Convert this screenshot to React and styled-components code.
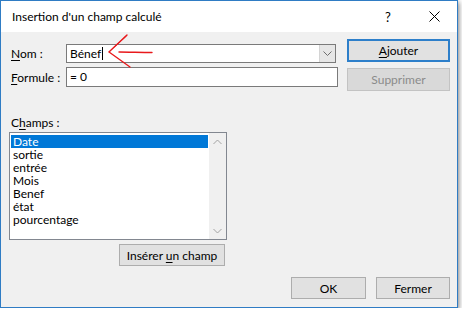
import React from 'react'
import styled, { createGlobalStyle } from 'styled-components'

const GlobalStyle = createGlobalStyle`
  html, body {
    margin: 0;
    background: #ffffff;
  }
  body {
    font-family: "Segoe UI", Lato, "Noto Sans", sans-serif;
    font-size: 12px;
    color: #000;
  }
`

const fields = ['Date', 'sortie', 'entrée', 'Mois', 'Benef', 'état', 'pourcentage']

const App = () => {
  return <>
    <GlobalStyle />
    <Window>
      <TitleBar>
        <Title>Insertion d'un champ calculé</Title>
        <CaptionButton>?</CaptionButton>
        <CaptionButton>
          <svg width="11" height="11" viewBox="0 0 11 11">
            <path d="M0.5 0.5 L10.5 10.5 M10.5 0.5 L0.5 10.5" stroke="#000" strokeWidth="1" />
          </svg>
        </CaptionButton>
      </TitleBar>

      <Body>
        <TopSection>
          <FormGrid>
            <Label><Key>N</Key>om :</Label>
            <TextInput $width={270} $height={19}>
              <InputText>Bénef</InputText>
              <Caret />
              <ComboArrow>
                <svg width="9" height="6" viewBox="0 0 9 6">
                  <path d="M0.5 0.5 L4.5 4.5 L8.5 0.5" stroke="#6d6d6d" fill="none" />
                </svg>
              </ComboArrow>
            </TextInput>
            <Label><Key>F</Key>ormule :</Label>
            <TextInput $width={272} $height={20}>
              <InputText>= 0</InputText>
            </TextInput>
          </FormGrid>

          <ButtonColumn>
            <Button $primary><Key>A</Key>jouter</Button>
            <Button disabled>Supprimer</Button>
          </ButtonColumn>
        </TopSection>

        <FieldsLabel>C<Key>h</Key>amps :</FieldsLabel>
        <ListBox>
          <Items>
            {fields.map((f, i) => (
              <Item key={f} $selected={i === 0}>{f}</Item>
            ))}
          </Items>
          <ScrollBar>
            <ScrollArrow>
              <svg width="9" height="6" viewBox="0 0 9 6">
                <path d="M0.5 5 L4.5 1 L8.5 5" stroke="#a3a3a3" fill="none" />
              </svg>
            </ScrollArrow>
            <ScrollArrow>
              <svg width="9" height="6" viewBox="0 0 9 6">
                <path d="M0.5 1 L4.5 5 L8.5 1" stroke="#a3a3a3" fill="none" />
              </svg>
            </ScrollArrow>
          </ScrollBar>
        </ListBox>
        <InsertRow>
          <Button $width={106} $height={22}>Insérer <Key>u</Key>n champ</Button>
        </InsertRow>

        <Footer>
          <Button $width={75} $height={22}>OK</Button>
          <Button $width={74} $height={22}>Fermer</Button>
        </Footer>
      </Body>

      <Scribble width="50" height="36" viewBox="0 0 50 36">
        <path d="M22 1 C17 6 10 12 4 18 C11 23 18 28 25 33" stroke="#e8191c" strokeWidth="1.4" fill="none" strokeLinecap="round" />
        <path d="M20 3 C15 8 9 13 5 17" stroke="#e8191c" strokeWidth="1" fill="none" strokeLinecap="round" />
        <path d="M14 18 C24 18 36 18.5 47 18.5" stroke="#e8191c" strokeWidth="1.4" fill="none" strokeLinecap="round" />
      </Scribble>
    </Window>
  </>
}

const Window = styled.div`
  position: relative;
  width: 458px;
  height: 308px;
  box-sizing: border-box;
  border: 1px solid #2f7cc4;
  background: #f0f0f0;
  display: flex;
  flex-direction: column;
  box-shadow: 1px 2px 5px rgba(0, 0, 0, 0.5);
`

const TitleBar = styled.div`
  height: 31px;
  background: #ffffff;
  display: flex;
  align-items: center;
  padding-left: 11px;
`

const Title = styled.div`
  flex: 1;
  font-size: 12px;
`

const CaptionButton = styled.div`
  width: 46px;
  height: 31px;
  display: flex;
  align-items: center;
  justify-content: center;
  font-size: 13px;
`

const Body = styled.div`
  flex: 1;
  display: flex;
  flex-direction: column;
  padding: 7px 6px 8px 8px;
`

const TopSection = styled.div`
  display: flex;
  align-items: flex-start;
`

const FormGrid = styled.div`
  width: 329px;
  margin-top: 5px;
  display: grid;
  grid-template-columns: 57px 1fr;
  row-gap: 4px;
  align-items: center;
`

const Label = styled.div`
  padding-left: 2px;
`

const Key = styled.span`
  text-decoration: underline;
  text-underline-offset: 2px;
`

const TextInput = styled.div`
  position: relative;
  width: ${({ $width }) => $width}px;
  height: ${({ $height }) => $height}px;
  box-sizing: border-box;
  border: 1px solid #7a7a7a;
  background: #ffffff;
  display: flex;
  align-items: center;
  padding-left: 3px;
`

const InputText = styled.span`
  line-height: 1;
`

const Caret = styled.span`
  width: 1px;
  height: 13px;
  margin-left: 1px;
  background: #000;
`

const ComboArrow = styled.div`
  margin-left: auto;
  align-self: stretch;
  width: 15px;
  background: #e6e6e6;
  border-left: 1px solid #d4d4d4;
  display: flex;
  align-items: center;
  justify-content: center;
`

const ButtonColumn = styled.div`
  margin-left: 9px;
  display: flex;
  flex-direction: column;
  gap: 6px;
`

const Button = styled.button`
  width: ${({ $width }) => $width || 103}px;
  height: ${({ $height }) => $height || 23}px;
  box-sizing: border-box;
  padding: 0;
  font-family: inherit;
  font-size: 12px;
  color: #000;
  background: #e1e1e1;
  border: ${({ $primary }) => $primary ? '2px solid #2d7fca' : '1px solid #adadad'};

  &:disabled {
    color: #8b8b8b;
    background: #d9d9d9;
    border-color: #c3c3c3;
  }
`

const FieldsLabel = styled.div`
  margin-top: 24px;
  padding-left: 2px;
  line-height: 15px;
  margin-bottom: 2px;
`

const ListBox = styled.div`
  width: 218px;
  height: 108px;
  box-sizing: border-box;
  border: 1px solid #828790;
  background: #ffffff;
  display: flex;
`

const Items = styled.div`
  flex: 1;
  padding: 2px 1px;
`

const Item = styled.div`
  height: 13px;
  line-height: 13px;
  padding-left: 2px;
  background: ${({ $selected }) => $selected ? '#0078d7' : 'transparent'};
  color: ${({ $selected }) => $selected ? '#ffffff' : '#000'};
`

const ScrollBar = styled.div`
  width: 17px;
  background: #f0f0f0;
  display: flex;
  flex-direction: column;
  justify-content: space-between;
`

const ScrollArrow = styled.div`
  height: 17px;
  display: flex;
  align-items: center;
  justify-content: center;
`

const InsertRow = styled.div`
  width: 216px;
  margin-top: 4px;
  display: flex;
  justify-content: flex-end;
`

const Footer = styled.div`
  margin-top: auto;
  margin-right: 1px;
  display: flex;
  justify-content: flex-end;
  gap: 10px;
`

const Scribble = styled.svg`
  position: absolute;
  left: 104px;
  top: 33px;
  pointer-events: none;
`

export default App
